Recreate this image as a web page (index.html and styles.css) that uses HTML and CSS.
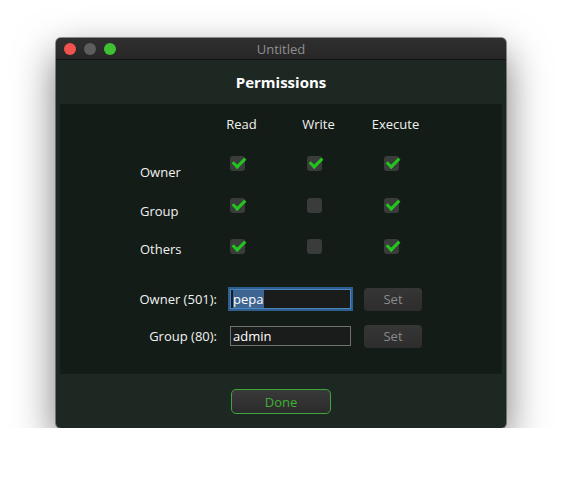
FILE: index.html
```html
<!DOCTYPE html>
<html lang="en">
<head>
    <meta charset="UTF-8">
    <title>Untitled</title>
    <link rel="stylesheet" href="styles.css">
</head>
<body>

    <!-- ウィンドウ -->
    <div class="window">
        <div class="titlebar">
            <div class="lights">
                <span class="light light-close"></span>
                <span class="light light-min"></span>
                <span class="light light-max"></span>
            </div>
            <div class="title">Untitled</div>
        </div>

        <div class="header">Permissions</div>

        <div class="panel">
            <!-- パーミッション表 -->
            <div class="perm-grid">
                <div></div>
                <div class="col-head">Read</div>
                <div class="col-head">Write</div>
                <div class="col-head">Execute</div>

                <div class="row-label row-label-1">Owner</div>
                <div class="cell"><span class="check on"></span></div>
                <div class="cell"><span class="check on"></span></div>
                <div class="cell"><span class="check on"></span></div>

                <div class="row-label row-label-2">Group</div>
                <div class="cell"><span class="check on"></span></div>
                <div class="cell"><span class="check"></span></div>
                <div class="cell"><span class="check on"></span></div>

                <div class="row-label row-label-3">Others</div>
                <div class="cell"><span class="check on"></span></div>
                <div class="cell"><span class="check"></span></div>
                <div class="cell"><span class="check on"></span></div>
            </div>

            <!-- 所有者 -->
            <div class="owner-form">
                <div class="owner-row">
                    <label class="owner-label">Owner (501):</label>
                    <div class="field field-focus"><span class="sel">pepa</span></div>
                    <button class="set-button">Set</button>
                </div>
                <div class="owner-row">
                    <label class="owner-label">Group (80):</label>
                    <div class="field">admin</div>
                    <button class="set-button">Set</button>
                </div>
            </div>
        </div>

        <div class="footer">
            <button class="done-button">Done</button>
        </div>
    </div>

</body>
</html>
```

FILE: styles.css
```css
/* ページ全体 */
body {
    margin: 0;
    padding: 38px 0 0 56px;
    background: #ffffff;
    font-family: "Open Sans", "Noto Sans", sans-serif;
    font-size: 13px;
    color: #e8ebe9;
}

.window {
    width: 450px;
    height: 390px;
    border-radius: 5px;
    overflow: hidden;
    background: #1e2823;
    box-shadow: 0 0 0 1px rgba(0, 0, 0, 0.4), 0 16px 40px rgba(0, 0, 0, 0.55);
    display: flex;
    flex-direction: column;
}

/* タイトルバー */
.titlebar {
    height: 21px;
    background: linear-gradient(#2f2f2f, #272727);
    border-bottom: 1px solid #141414;
    display: flex;
    align-items: center;
    position: relative;
}

.lights {
    display: flex;
    gap: 8px;
    padding-left: 8px;
}

.light {
    width: 12px;
    height: 12px;
    border-radius: 50%;
}

.light-close { background: #f2524d; }
.light-min { background: #5d5d5d; }
.light-max { background: #3fbf33; }

.title {
    position: absolute;
    left: 0;
    right: 0;
    top: 2px;
    text-align: center;
    color: #8f8f8f;
    font-size: 13px;
}

/* 見出し */
.header {
    height: 44px;
    line-height: 44px;
    text-align: center;
    font-size: 15px;
    font-weight: 700;
    color: #ffffff;
}

.panel {
    height: 270px;
    margin: 0 4px;
    background: #141c18;
}

/* パーミッション表 */
.perm-grid {
    display: grid;
    grid-template-columns: 59px 77px 77px 77px;
    grid-template-rows: 41px 42px 41px 41px;
    padding-left: 80px;
}

.col-head {
    text-align: center;
    line-height: 41px;
    padding-left: 8px;
    color: #f0f2f1;
}

.row-label {
    color: #f0f2f1;
    white-space: nowrap;
}

.row-label-1 { padding-top: 18px; }
.row-label-2 { padding-top: 15px; }
.row-label-3 { padding-top: 12px; }

.cell {
    display: flex;
    justify-content: center;
    padding-top: 11px;
}

.check {
    width: 15px;
    height: 15px;
    border-radius: 3px;
    background: #3a3b3b;
    position: relative;
}

.check.on::after {
    content: "";
    position: absolute;
    left: 5px;
    top: -1px;
    width: 5px;
    height: 10px;
    border-right: 3px solid #22c41d;
    border-bottom: 3px solid #22c41d;
    transform: rotate(45deg);
}

/* 所有者フォーム */
.owner-form {
    display: flex;
    flex-direction: column;
    gap: 15px;
    padding-top: 19px;
}

.owner-row {
    display: flex;
    align-items: center;
    height: 22px;
}

.owner-label {
    width: 157px;
    text-align: right;
    color: #f0f2f1;
}

.field {
    margin-left: 13px;
    width: 117px;
    height: 18px;
    line-height: 18px;
    border: 1px solid #6f7370;
    background: #1a1b1b;
    padding-left: 2px;
    color: #ffffff;
    font-size: 13px;
}

.field-focus {
    margin-left: 13px;
    border-color: #4a86c0;
    box-shadow: 0 0 0 2px #2e5f8e;
}

.sel {
    background: #3e6592;
    padding-right: 1px;
}

.set-button {
    margin-left: 13px;
    width: 58px;
    height: 23px;
    border: none;
    border-radius: 4px;
    background: linear-gradient(#363636, #2d2d2d);
    color: #8a8a8a;
    font-family: inherit;
    font-size: 13px;
}

/* フッター */
.footer {
    flex: 1;
    display: flex;
    justify-content: center;
    padding-top: 15px;
}

.done-button {
    width: 100px;
    height: 25px;
    border: 1px solid #3ea53a;
    border-radius: 5px;
    background: linear-gradient(#393939, #2b2b2b);
    color: #3fb034;
    font-family: inherit;
    font-size: 13px;
}
```
